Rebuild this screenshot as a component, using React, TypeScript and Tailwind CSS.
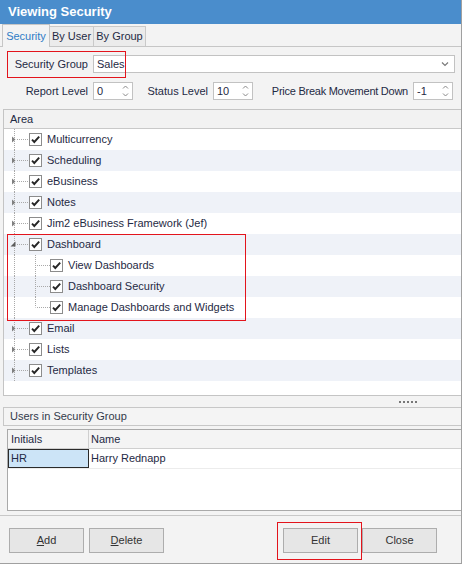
import React from "react";

type TreeRow = { label: string; level: 0 | 1; expanded?: boolean; last?: boolean };

const rows: TreeRow[] = [
  { label: "Multicurrency", level: 0 },
  { label: "Scheduling", level: 0 },
  { label: "eBusiness", level: 0 },
  { label: "Notes", level: 0 },
  { label: "Jim2 eBusiness Framework (Jef)", level: 0 },
  { label: "Dashboard", level: 0, expanded: true },
  { label: "View Dashboards", level: 1 },
  { label: "Dashboard Security", level: 1 },
  { label: "Manage Dashboards and Widgets", level: 1, last: true },
  { label: "Email", level: 0 },
  { label: "Lists", level: 0 },
  { label: "Templates", level: 0 },
];

function Check() {
  return (
    <svg width="13" height="13" viewBox="0 0 13 13" className="shrink-0">
      <rect x="0.5" y="0.5" width="12" height="12" fill="#ffffff" stroke="#8c8c8c" />
      <path d="M3 6.6 L5.3 9 L10.2 3.6" fill="none" stroke="#262626" strokeWidth="1.9" />
    </svg>
  );
}

function Connector({ row }: { row: TreeRow }) {
  const dot = { stroke: "#a9a9a9", strokeWidth: 1, strokeDasharray: "1 1" };
  if (row.level === 0) {
    return (
      <svg width="25" height="21" viewBox="0 0 25 21" className="shrink-0">
        <line x1="10.5" y1="0" x2="10.5" y2="21" {...dot} />
        <line x1="13" y1="10.5" x2="25" y2="10.5" {...dot} />
        {row.expanded ? (
          <polygon points="11.5,7.5 11.5,12.5 6.5,12.5" fill="#5c5c5c" />
        ) : (
          <polygon points="8,7.5 11.5,10.5 8,13.5" fill="#808080" />
        )}
      </svg>
    );
  }
  return (
    <svg width="46" height="21" viewBox="0 0 46 21" className="shrink-0">
      <line x1="10.5" y1="0" x2="10.5" y2="21" {...dot} />
      <line x1="31.5" y1="0" x2="31.5" y2={row.last ? 10.5 : 21} {...dot} />
      <line x1="33" y1="10.5" x2="46" y2="10.5" {...dot} />
    </svg>
  );
}

function Spinner({ value }: { value: string }) {
  return (
    <div className="w-[40px] h-[18px] bg-white border border-[#c2c2c2] flex items-center justify-between pl-[3px] pr-[3px]">
      <span className="leading-none">{value}</span>
      <svg width="7" height="14" viewBox="0 0 7 14">
        <path d="M1 4.5 L3.5 2 L6 4.5" fill="none" stroke="#8a8a8a" strokeWidth="1" />
        <path d="M1 9.5 L3.5 12 L6 9.5" fill="none" stroke="#8a8a8a" strokeWidth="1" />
      </svg>
    </div>
  );
}

function Btn({ children }: { children: React.ReactNode }) {
  return (
    <div className="w-[75px] h-[25px] border border-[#adadad] bg-[#e6e6e6] flex items-center justify-center text-[#333333]">
      {children}
    </div>
  );
}

export default function App() {
  return (
    <div className="relative w-[462px] h-[564px] bg-[#f3f3f3] border-r border-b border-[#a0a0a0] flex flex-col overflow-hidden font-['Liberation_Sans',Arial,sans-serif] text-[11px] text-[#1f2a44]">
      {/* Title */}
      <div className="h-[24px] shrink-0 bg-[#4a8dcc] flex items-center pl-[8px] text-white font-bold text-[13px]">
        Viewing Security
      </div>

      {/* Tabs */}
      <div className="h-[23px] shrink-0 flex items-end pl-[2px] border-b border-[#c6c6c6]">
        <div className="w-[48px] h-[23px] -mb-px border border-b-0 border-[#c6c6c6] bg-[#f3f3f3] flex items-center justify-center text-[#2f7cc6]">
          Security
        </div>
        <div className="w-[44px] h-[20px] border border-l-0 border-b-0 border-[#c9c9c9] bg-[#ebebeb] flex items-center justify-center">
          By User
        </div>
        <div className="w-[52px] h-[20px] border border-l-0 border-b-0 border-[#c9c9c9] bg-[#ebebeb] flex items-center justify-center">
          By Group
        </div>
      </div>

      {/* Security group */}
      <div className="mt-[8px] h-[18px] shrink-0 flex items-center">
        <div className="w-[88px] text-right">Security Group</div>
        <div className="ml-[5px] w-[362px] h-[18px] bg-white border border-[#c2c2c2] flex items-center justify-between pl-[3px] pr-[5px]">
          <span>Sales</span>
          <svg width="8" height="6" viewBox="0 0 8 6">
            <path d="M1 1.5 L4 4.5 L7 1.5" fill="none" stroke="#7a7a7a" strokeWidth="1.2" />
          </svg>
        </div>
      </div>

      {/* Levels */}
      <div className="mt-[9px] h-[18px] shrink-0 flex items-center">
        <div className="w-[88px] text-right">Report Level</div>
        <div className="ml-[5px]">
          <Spinner value="0" />
        </div>
        <div className="w-[75px] text-right">Status Level</div>
        <div className="ml-[5px]">
          <Spinner value="10" />
        </div>
        <div className="w-[155px] text-right tracking-[-0.25px]">Price Break Movement Down</div>
        <div className="ml-[5px]">
          <Spinner value="-1" />
        </div>
      </div>

      {/* Tree */}
      <div className="mt-[9px] ml-[3px] h-[287px] shrink-0 bg-white border-t border-l border-b border-[#c4c4c4] flex flex-col">
        <div className="h-[19px] shrink-0 bg-[#f2f2f2] border-b border-[#c9c9c9] flex items-center pl-[6px]">
          Area
        </div>
        {rows.map((r, i) => (
          <div
            key={r.label}
            className={i % 2 === 1 ? "h-[21px] shrink-0 flex items-center bg-[#eff2f8]" : "h-[21px] shrink-0 flex items-center"}
          >
            <Connector row={r} />
            <Check />
            <span className="ml-[5px] whitespace-nowrap">{r.label}</span>
          </div>
        ))}
      </div>

      {/* Splitter */}
      <div className="h-[11px] shrink-0 flex items-center justify-end pr-[44px]">
        <div className="flex gap-[2px]">
          <div className="w-[2px] h-[2px] bg-[#777777]" />
          <div className="w-[2px] h-[2px] bg-[#777777]" />
          <div className="w-[2px] h-[2px] bg-[#777777]" />
          <div className="w-[2px] h-[2px] bg-[#777777]" />
          <div className="w-[2px] h-[2px] bg-[#777777]" />
        </div>
      </div>

      {/* Users header */}
      <div className="ml-[3px] h-[19px] shrink-0 bg-[#f4f4f4] border-t border-l border-b border-[#c7c7c7] flex items-center pl-[6px] text-[#333a4a]">
        Users in Security Group
      </div>

      {/* Grid */}
      <div className="mt-[3px] ml-[7px] h-[82px] shrink-0 bg-white border-t border-l border-b border-[#a9a9a9] flex flex-col">
        <div className="h-[19px] shrink-0 bg-[#f4f4f4] border-b border-[#cfcfcf] flex">
          <div className="w-[81px] border-r border-[#cfcfcf] flex items-center pl-[3px]">Initials</div>
          <div className="flex items-center pl-[2px]">Name</div>
        </div>
        <div className="h-[20px] shrink-0 flex border-b border-[#ececec]">
          <div className="w-[81px] bg-[#cce4f7] border border-[#2a2a2a] flex items-center pl-[2px]">HR</div>
          <div className="flex items-center pl-[2px]">Harry Rednapp</div>
        </div>
      </div>

      {/* Buttons */}
      <div className="mt-[4px] flex-1 border-t border-[#c8c8c8] flex items-start justify-between pt-[12px] pl-[9px] pr-[24px]">
        <div className="flex gap-[5px]">
          <Btn>
            <span><span className="underline">A</span>dd</span>
          </Btn>
          <Btn>
            <span><span className="underline">D</span>elete</span>
          </Btn>
        </div>
        <div className="flex gap-[4px]">
          <Btn>Edit</Btn>
          <Btn>Close</Btn>
        </div>
      </div>

      {/* Annotation boxes */}
      <div className="absolute z-10 left-[7px] top-[51px] w-[119px] h-[27px] border border-[#e3141c]" />
      <div className="absolute z-10 left-[7px] top-[234px] w-[239px] h-[87px] border border-[#e3141c]" />
      <div className="absolute z-10 left-[277px] top-[522px] w-[85px] h-[38px] border border-[#e3141c]" />
    </div>
  );
}
